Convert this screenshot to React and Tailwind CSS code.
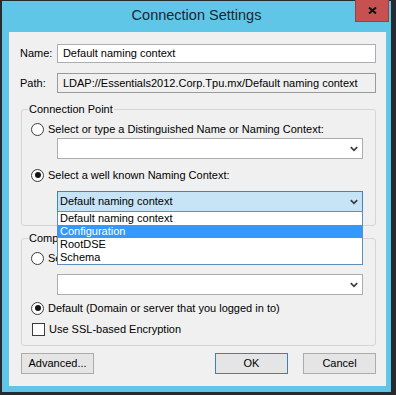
import React from "react";

const Chevron = () => (
  <svg width="8" height="6" viewBox="0 0 8 6" className="block">
    <path d="M0.8 1.2 L4 4.4 L7.2 1.2" fill="none" stroke="#3c3c3c" strokeWidth="1.7" />
  </svg>
);

const Radio = ({ checked }) => (
  <span className="w-[13px] h-[13px] shrink-0 rounded-full border border-[#3c3c3c] bg-white flex items-center justify-center">
    {checked && <span className="w-[6px] h-[6px] rounded-full bg-[#141414]" />}
  </span>
);

const Combo = ({ className = "", children, open }) => (
  <div
    className={
      "relative ml-[35px] w-[306px] h-[21px] shrink-0 border flex items-center " +
      (open ? "bg-[#c7e4f6] border-[#3d86c0] " : "bg-white border-[#acacac] ") +
      className
    }
  >
    <span className="flex-1 pl-[2px]">{children}</span>
    <span className="mr-[4px]">
      <Chevron />
    </span>
  </div>
);

const Button = ({ children, primary, className = "" }) => (
  <div
    className={
      "w-[73px] h-[21px] flex items-center justify-center bg-[#e5e5e5] border " +
      (primary ? "border-[#3c80c2] " : "border-[#acacac] ") +
      className
    }
  >
    {children}
  </div>
);

export default function App() {
  return (
    <div className="w-[396px] h-[395px] bg-[#262b2f] pt-[1px] pl-[2px] font-['Liberation_Sans',Arial,sans-serif] text-[11px] leading-[13px] text-black overflow-hidden">
      <div className="relative w-[389px] h-[391px] bg-[#5fc6e7] flex flex-col">
        <div className="h-[31px] leading-[29px] text-center text-[14.5px] text-[#1b2733]">
          Connection Settings
        </div>
        <div className="absolute top-[-1px] right-[2px] w-[34px] h-[22px] bg-[#c75050] border border-t-0 border-[#9e3f3f] flex items-center justify-center">
          <svg width="9" height="7" viewBox="0 0 9 7">
            <path d="M1 0.5 L8 6.5 M8 0.5 L1 6.5" stroke="#111" strokeWidth="2" />
          </svg>
        </div>

        <div className="ml-[7px] w-[377px] h-[354px] bg-[#f0f0f0] pl-[12px] pr-[10px] pt-[12px] flex flex-col">
          <div className="flex items-center h-[19px]">
            <span className="w-[36px] -ml-[1px] mr-[1px]">Name:</span>
            <div className="w-[320px] h-[19px] border border-[#abadb3] bg-white pl-[5px] flex items-center">
              Default naming context
            </div>
          </div>
          <div className="mt-[10px] flex items-center h-[20px]">
            <span className="w-[36px] -ml-[1px] mr-[1px]">Path:</span>
            <div className="w-[320px] h-[20px] border border-[#9a9a9a] bg-[#f0f0f0] pl-[5px] flex items-center">
              LDAP://Essentials2012.Corp.Tpu.mx/Default naming context
            </div>
          </div>

          <div className="mt-[16px] border border-[#d5d5d5] rounded-[3px] flex flex-col pb-[13px]">
            <span className="-mt-[7px] ml-[6px] self-start px-[1px] bg-[#f0f0f0] h-[13px]">
              Connection Point
            </span>
            <div className="mt-[6px] ml-[9px] flex items-center h-[14px] gap-[4px]">
              <Radio />
              <span>Select or type a Distinguished Name or Naming Context:</span>
            </div>
            <Combo className="mt-[2px]" />
            <div className="mt-[9px] ml-[9px] flex items-center h-[14px] gap-[4px]">
              <Radio checked />
              <span>Select a well known Naming Context:</span>
            </div>
            <Combo className="mt-[9px] z-10" open>
              Default naming context
              <div className="absolute left-[-1px] top-[19px] w-[306px] h-[54px] border border-[#5f8fbb] bg-white flex flex-col">
                <div className="h-[13px] pl-[2px] leading-[13px]">Default naming context</div>
                <div className="h-[13px] pl-[2px] leading-[13px] bg-[#3399ff] text-white">Configuration</div>
                <div className="h-[13px] pl-[2px] leading-[13px]">RootDSE</div>
                <div className="h-[13px] pl-[2px] leading-[13px]">Schema</div>
              </div>
            </Combo>
          </div>

          <div className="mt-[12px] border border-[#d5d5d5] rounded-[3px] flex flex-col pb-[9px]">
            <span className="-mt-[7px] ml-[6px] self-start pl-[1px] bg-[#f0f0f0] h-[13px] w-[29px] overflow-hidden whitespace-nowrap">
              Computer
            </span>
            <div className="mt-[6px] ml-[9px] flex items-center h-[14px] gap-[4px]">
              <Radio />
              <span className="w-[9px] overflow-hidden whitespace-nowrap">Select or type a domain or server:</span>
            </div>
            <Combo className="mt-[9px]" />
            <div className="mt-[6px] ml-[9px] flex items-center h-[14px] gap-[4px]">
              <Radio checked />
              <span>Default (Domain or server that you logged in to)</span>
            </div>
            <div className="mt-[7px] ml-[10px] flex items-center h-[14px] gap-[4px]">
              <span className="w-[13px] h-[13px] shrink-0 border border-[#3c3c3c] bg-white" />
              <span>Use SSL-based Encryption</span>
            </div>
          </div>

          <div className="mt-[7px] flex">
            <Button>Advanced...</Button>
            <Button primary className="ml-auto">OK</Button>
            <Button className="ml-[15px]">Cancel</Button>
          </div>
        </div>
      </div>
    </div>
  );
}
